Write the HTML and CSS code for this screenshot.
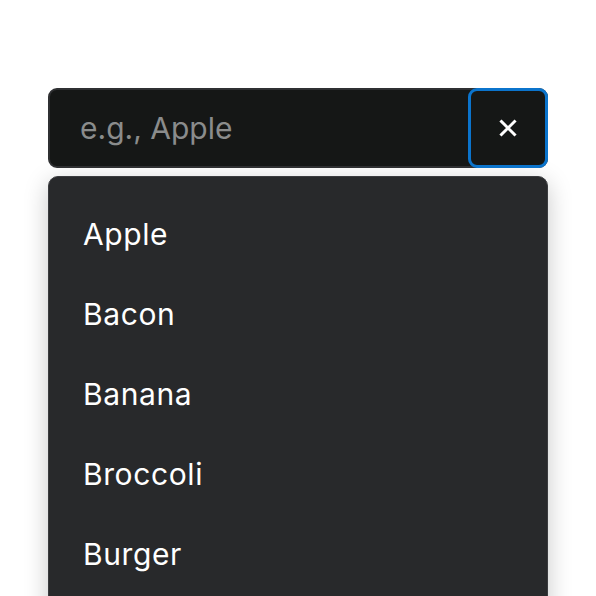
FILE: index.html
```html
<!DOCTYPE html>
<html lang="en">
<head>
<meta charset="utf-8">
<link rel="stylesheet" href="styles.css">
</head>
<body>
<div class="combo">
  <div class="field">
    <input class="input" type="text" placeholder="e.g., Apple">
    <button class="clear" aria-label="Clear">
      <svg width="18" height="18" viewBox="0 0 18 18"><path d="M2.5 2.5 L15.5 15.5 M15.5 2.5 L2.5 15.5" stroke="#fff" stroke-width="3" stroke-linecap="square" fill="none"/></svg>
    </button>
  </div>
  <ul class="menu">
    <li class="item">Apple</li>
    <li class="item">Bacon</li>
    <li class="item">Banana</li>
    <li class="item">Broccoli</li>
    <li class="item">Burger</li>
  </ul>
</div>
</body>
</html>
```

FILE: styles.css
```css
html, body {
  margin: 0;
  padding: 0;
  background: #ffffff;
  height: 596px;
  overflow: hidden;
}
body {
  font-family: Inter, "Noto Sans", sans-serif;
}
.combo {
  margin: 88px 0 0 48px;
  width: 500px;
  display: flex;
  flex-direction: column;
  gap: 8px;
}
.field {
  display: flex;
  height: 80px;
  box-sizing: border-box;
  border: 2px solid #2f3032;
  border-radius: 9px;
  background: #151716;
  position: relative;
}
.input {
  flex: 1;
  min-width: 0;
  border: none;
  background: transparent;
  outline: none;
  padding: 0 0 0 30px;
  font-family: inherit;
  font-size: 30px;
  letter-spacing: 0;
  color: #ffffff;
}
.input::placeholder {
  color: #8a8c8c;
}
.clear {
  width: 80px;
  height: 80px;
  margin: -2px -2px -2px 0;
  box-sizing: border-box;
  border: 3px solid #0b74cc;
  border-radius: 9px;
  background: #151716;
  display: flex;
  align-items: center;
  justify-content: center;
  padding: 0;
}
.menu {
  list-style: none;
  margin: 0;
  padding: 17px 0 40px 0;
  background: #28292b;
  border: 1px solid #3b3c3f;
  border-radius: 10px;
  box-shadow: 0 6px 24px rgba(0, 0, 0, 0.22);
}
.item {
  height: 80px;
  display: flex;
  align-items: center;
  padding-left: 34px;
  font-size: 30px;
  letter-spacing: 0.6px;
  color: #ffffff;
}
```
